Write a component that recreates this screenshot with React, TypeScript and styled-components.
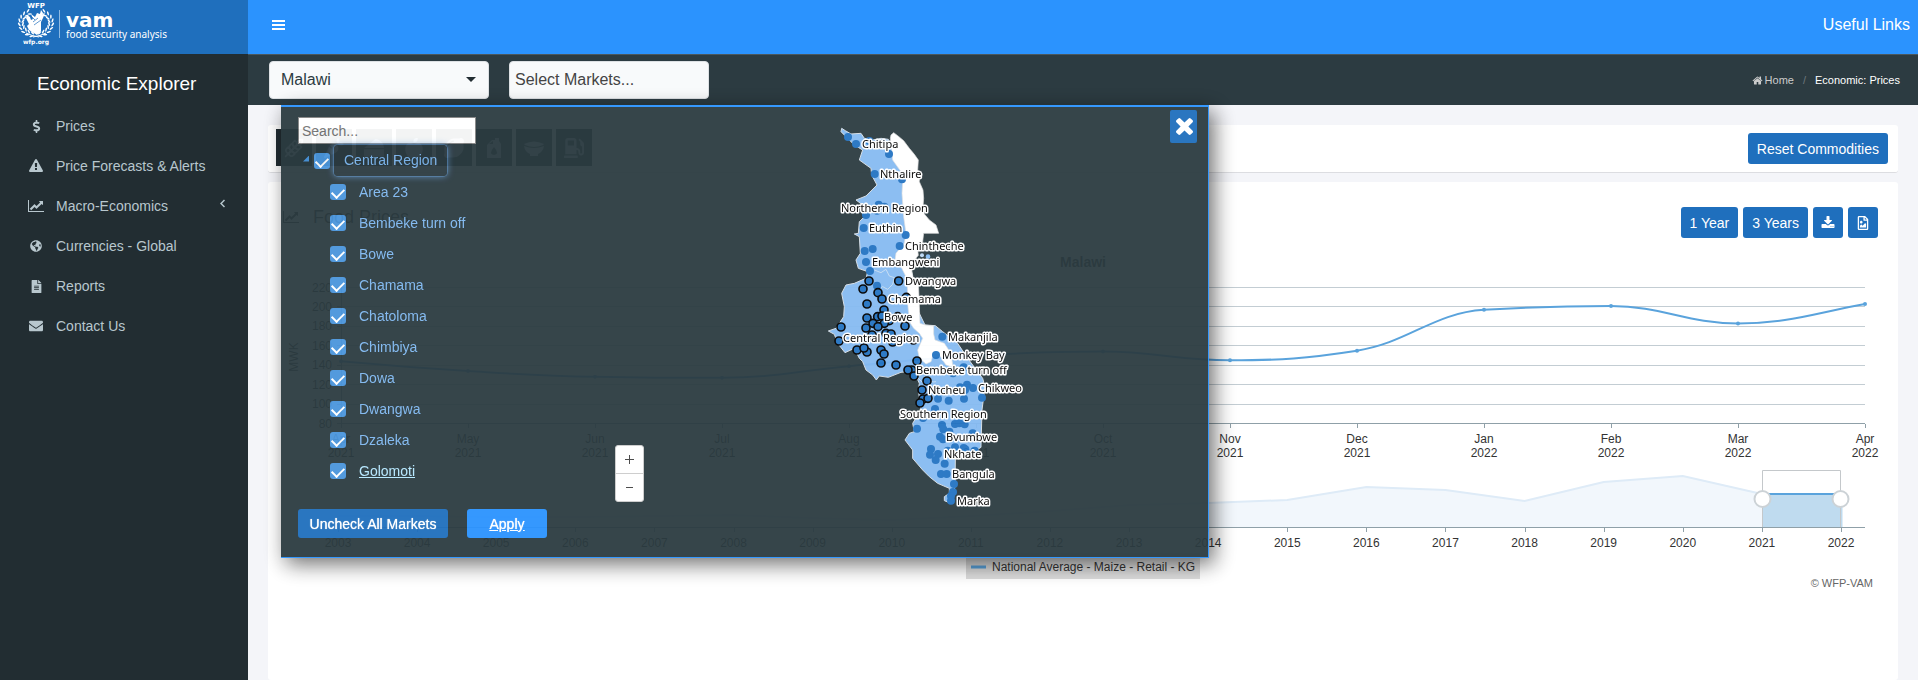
import React, { useEffect, useRef, useState } from "react";
import styled, { createGlobalStyle } from "styled-components";
import { FaDollarSign, FaGlobeAmericas, FaFileAlt, FaEnvelope, FaRegFileImage, FaCheese, FaCarrot, FaGasPump, FaAppleAlt, FaLemon } from "react-icons/fa";
import { LuWheat } from "react-icons/lu";

const GlobalStyle = createGlobalStyle`
  * { box-sizing: border-box; }
  body {
    margin: 0;
    background: #f4f5f9;
    color: #333;
    font: 14px/20px "Liberation Sans", Arial, sans-serif;
  }
  button, input, select { font: inherit; }
`;

const Shell = styled.div`
  display: flex;
  flex-direction: column;
  min-height: 100vh;
`;
const TopBar = styled.header`
  display: flex;
  height: 54px;
  background: #2b93fe;
`;
const Brand = styled.a`
  display: block;
  width: 248px;
  flex: none;
  background: #1f6fbd;
`;
const TopNav = styled.nav`
  flex: 1;
  display: flex;
  justify-content: space-between;
  align-items: center;
  padding: 0 8px 4px 24px;
`;
const MenuButton = styled.button`
  display: grid;
  gap: 2px;
  width: 13px;
  padding: 0;
  border: 0;
  background: none;
  span { height: 2px; background: #fff; }
`;
const TopLink = styled.a`
  color: #fff;
  font-size: 16px;
  text-decoration: none;
`;
const Body = styled.div`
  flex: 1;
  display: flex;
`;
const Sidebar = styled.aside`
  width: 248px;
  flex: none;
  background: #222d32;
`;
const SideTitle = styled.h1`
  margin: 18px 0 10px 37px;
  color: #fff;
  font-size: 19px;
  font-weight: 400;
  line-height: 24px;
`;
const SideList = styled.ul`
  margin: 0;
  padding: 0;
  list-style: none;
`;
const SideItem = styled.a`
  display: flex;
  align-items: center;
  height: 40px;
  padding: 0 23px 0 28px;
  color: #b8c7ce;
  text-decoration: none;
  span { flex: 1; }
`;
const SideIcon = styled.i`
  display: flex;
  justify-content: center;
  width: 16px;
  margin-right: 12px;
`;
const Main = styled.main`
  position: relative;
  flex: 1;
  min-width: 0;
  display: flex;
  flex-direction: column;
`;
const FilterBar = styled.div`
  display: flex;
  align-items: center;
  height: 51px;
  padding: 0 18px 0 21px;
  border-top: 1px solid #4a575d;
  background: #2c3b41;
`;
const SelectWrap = styled.label`
  position: relative;
  width: 220px;
  margin-right: 20px;
  svg { position: absolute; right: 13px; top: 16px; pointer-events: none; }
`;
const CountrySelect = styled.select`
  display: block;
  width: 100%;
  height: 38px;
  padding: 0 11px;
  border: 1px solid #dde1e4;
  border-radius: 4px;
  background: #f8fafb;
  color: #2c3b41;
  font-size: 16px;
  appearance: none;
`;
const MarketInput = styled.input`
  width: 200px;
  height: 38px;
  padding: 0 5px;
  border: 1px solid #dde1e4;
  border-radius: 4px;
  background: #f8fafb;
  font-size: 16px;
  &::placeholder { color: #444; opacity: 1; }
`;
const Crumbs = styled.nav`
  display: flex;
  align-items: center;
  gap: 9px;
  margin-left: auto;
  color: #6c777c;
  font-size: 11px;
  a { display: flex; align-items: center; gap: 2px; color: #ccc; text-decoration: none; }
  strong { color: #fff; font-weight: 400; }
`;
const Card = styled.section<{ $grow?: boolean }>`
  margin: 0 20px;
  border-radius: 3px;
  background: #fff;
  flex: ${(p) => (p.$grow ? 1 : "none")};
`;
const CommodityCard = styled(Card)`
  display: flex;
  align-items: center;
  gap: 4px;
  height: 48px;
  margin: 20px 20px 9px;
  padding: 0 10px 0 8px;
  border-bottom: 1px solid #dcdde1;
`;
const CommodityTile = styled.button`
  display: grid;
  place-items: center;
  width: 36px;
  height: 37px;
  margin-bottom: 2px;
  padding: 0;
  border: 0;
  background: #222d32;
  color: #b8c7ce;
  font-size: 20px;
`;
const Spacer = styled.span`flex: 1;`;
const BlueButton = styled.button`
  display: inline-flex;
  align-items: center;
  justify-content: center;
  height: 31px;
  padding: 0 9px;
  border: 0;
  border-radius: 3px;
  background: #1f6fbd;
  color: #fff;
  white-space: nowrap;
`;
const IconButton = styled(BlueButton)`padding: 0 8px;`;
const CardHead = styled.div`
  display: flex;
  align-items: flex-start;
  justify-content: space-between;
  padding: 25px 20px 0 15px;
`;
const CardTitle = styled.h2`
  display: flex;
  align-items: center;
  gap: 14px;
  margin: 0;
  font-size: 18px;
  font-weight: 400;
  line-height: 20px;
`;
const ButtonRow = styled.div`
  display: flex;
  gap: 5px;
`;
const ChartBox = styled.div`
  height: 360px;
  svg { display: block; }
  text { font: 12px "Liberation Sans", Arial, sans-serif; fill: #333; }
  text.title { font-size: 14px; font-weight: 700; }
  text.credit { font-size: 11px; fill: #666; }
`;
const Popup = styled.section`
  position: absolute;
  left: 33px;
  top: 51px;
  display: grid;
  grid-template-columns: 324px 1fr;
  width: min(928px, calc(100% - 66px));
  border: solid #2b93fe;
  border-width: 2px 1px 1px 0;
  background: #2c3b41;
  opacity: 0.95;
  box-shadow: 5px 6px 20px rgba(0, 0, 0, 0.6);
`;
const TreePane = styled.div`
  padding: 10px 0 19px 17px;
`;
const SearchInput = styled.input`
  display: block;
  width: 178px;
  height: 27px;
  padding: 0 3px;
  border: 1px solid #858585;
  background: #fff;
  &::placeholder { color: #757575; opacity: 1; }
`;
const Tree = styled.ul`
  height: 341px;
  margin: 1px 0 23px;
  padding: 0;
  list-style: none;
  ul { margin: 0; padding: 0 0 0 17px; list-style: none; }
`;
const TreeRow = styled.div`
  display: flex;
  align-items: center;
  height: 31px;
  padding-left: 15px;
`;
const Check = styled.input`
  appearance: none;
  display: grid;
  place-items: start center;
  width: 16px;
  height: 16px;
  margin: 0;
  border-radius: 3px;
  background: #4a95dc;
  &:checked::after {
    content: "";
    width: 6px;
    height: 10px;
    margin-top: 2px;
    border: solid #fff;
    border-width: 0 2px 2px 0;
    transform: rotate(45deg);
  }
`;
const MarketLabel = styled.label<{ $hover?: boolean }>`
  padding: 0 13px;
  color: ${(p) => (p.$hover ? "#b5e8ff" : "#7fb8f0")};
  text-decoration: ${(p) => (p.$hover ? "underline" : "none")};
`;
const RegionLabel = styled.label`
  height: 31px;
  margin-left: 4px;
  padding: 5px 10px;
  border-radius: 4px;
  background: rgba(44, 59, 65, 0.9);
  color: #7fb8f0;
  box-shadow: 0 0 0 1px rgba(90, 140, 190, 0.5), 0 0 7px rgba(110, 170, 230, 0.8);
`;
const Toggle = styled.button`
  width: 6px;
  height: 6px;
  margin: 0 5px 4px -11px;
  padding: 0;
  border: 0;
  background: #4a95dc;
  clip-path: polygon(100% 0, 100% 100%, 0 100%);
`;
const RootRow = styled(TreeRow)`
  padding-left: 16px;
`;
const PopupButton = styled(BlueButton)<{ $bright?: boolean }>`
  height: 29px;
  min-width: ${(p) => (p.$bright ? 80 : 150)}px;
  background: ${(p) => (p.$bright ? "#2b93fe" : "#1f6fbd")};
  text-decoration: ${(p) => (p.$bright ? "underline" : "none")};
  text-shadow: 0 0 1px #fff;
`;
const PopupActions = styled.div`
  display: flex;
  gap: 19px;
`;
const MapPane = styled.div`
  position: relative;
  display: flex;
  justify-content: center;
  align-items: flex-start;
  text {
    font: 11px "Noto Sans", sans-serif;
    fill: #000;
    stroke: #fff;
    stroke-width: 3px;
    stroke-linejoin: round;
    paint-order: stroke;
  }
`;
const ZoomBar = styled.div`
  position: absolute;
  left: 10px;
  bottom: 55px;
  width: 29px;
  border: 1px solid #ccc;
  border-radius: 3px;
  background: #fff;
`;
const ZoomButton = styled.button`
  display: grid;
  place-items: center;
  width: 27px;
  height: 27px;
  padding: 0;
  border: 0;
  background: none;
  color: #333;
  & + & { height: 28px; border-top: 1px solid #ccc; }
`;
const CloseButton = styled.button`
  position: absolute;
  top: 3px;
  right: 11px;
  display: grid;
  place-items: center;
  width: 27px;
  height: 33px;
  padding: 0 0 0 1px;
  border: 0;
  border-radius: 2px;
  background: #1f6fbd;
`;

const GLYPHS = {
  lineChart: "M2048 1536v128h-2048v-1536h128v1408h1920zM1920 288v435q0 21-19.5 29.5t-35.5-7.5l-121-121-633 633q-10 10-23 10t-23-10l-233-233-416 416-192-192 585-585q10-10 23-10t23 10l233 233 464-464-121-121q-16-16-7.5-35.5t29.5-19.5h435q14 0 23 9t9 23z",
  warning: "M1024 1375v-190q0-14-9.5-23.5t-22.5-9.5h-192q-13 0-22.5 9.5t-9.5 23.5v190q0 14 9.5 23.5t22.5 9.5h192q13 0 22.5-9.5t9.5-23.5zm-2-374l18-459q0-12-10-19-13-11-24-11h-220q-11 0-24 11-10 7-10 21l17 457q0 10 10 16.5t24 6.5h185q14 0 23.5-6.5t10.5-16.5zm-14-934l768 1408q35 63-2 126-17 29-46.5 46t-63.5 17h-1536q-34 0-63.5-17t-46.5-46q-37-63-2-126l768-1408q17-31 47-49t65-18 65 18 47 49z",
  home: "M1472 992v480q0 26-19 45t-45 19h-384v-384h-256v384h-384q-26 0-45-19t-19-45v-480q0-1 .5-3t.5-3l575-474 575 474q1 2 1 6zm223-69l-62 74q-8 9-21 11h-3q-13 0-21-7l-692-577-692 577q-12 8-24 7-13-2-21-11l-62-74q-8-10-7-23.5t11-21.5l719-599q32-26 76-26t76 26l244 204v-195q0-14 9-23t23-9h192q14 0 23 9t9 23v408l219 182q10 8 11 21.5t-7 23.5z",
  download: "M1344 1344q0-26-19-45t-45-19-45 19-19 45 19 45 45 19 45-19 19-45zm256 0q0-26-19-45t-45-19-45 19-19 45 19 45 45 19 45-19 19-45zm128-224v320q0 40-28 68t-68 28h-1472q-40 0-68-28t-28-68v-320q0-40 28-68t68-28h465l135 136q58 56 136 56t136-56l136-136h464q40 0 68 28t28 68zm-325-569q17 41-14 70l-448 448q-18 19-45 19t-45-19l-448-448q-31-29-14-70 17-39 59-39h256v-448q0-26 19-45t45-19h256q26 0 45 19t19 45v448h256q42 0 59 39z",
  times: "M1490 1322q0 40-28 68l-136 136q-28 28-68 28t-68-28l-294-294-294 294q-28 28-68 28t-68-28l-136-136q-28-28-28-68t28-68l294-294-294-294q-28-28-28-68t28-68l136-136q28-28 68-28t68 28l294 294 294-294q28-28 68-28t68 28l136 136q28 28 28 68t-28 68l-294 294 294 294q28 28 28 68z",
};
function Glyph({ name, size, wide }: { name: keyof typeof GLYPHS; size: number; wide?: boolean }) {
  return (
    <svg width={wide ? Math.round((size * 8) / 7) : size} height={size} viewBox={`0 0 ${wide ? 2048 : 1792} 1792`} fill="currentColor" aria-hidden="true">
      <path d={GLYPHS[name]} />
    </svg>
  );
}
function OilJug() {
  return (
    <svg width="16" height="20" viewBox="0 0 16 20" fill="currentColor" fillRule="evenodd" aria-hidden="true">
      <path d="M2 6l4-4h3V0h4v3l2 3v14H1V7zM3 6h4V3zM8 9q-6 7 0 8 6-1 0-8z" />
    </svg>
  );
}
function Bowl() {
  return (
    <svg width="22" height="16" viewBox="0 0 22 16" fill="currentColor" aria-hidden="true">
      <path d="M1 4q10-5 20 0l-1 1q-9 4-18 0zM1 6q10 4 20 0-1 6-6 8v2H7v-2Q2 12 1 6z" />
    </svg>
  );
}

function Logo() {
  const leaves = Array.from({ length: 9 }, (_, i) => 105 + i * 17);
  return (
    <svg width="200" height="54" viewBox="0 0 200 54" fill="#fff" role="img" aria-label="WFP vam food security analysis">
      <text x="36" y="8" textAnchor="middle" fontFamily="DejaVu Sans" fontWeight="700" fontSize="7">WFP</text>
      <text x="36" y="44" textAnchor="middle" fontFamily="DejaVu Sans" fontWeight="700" fontSize="6">wfp.org</text>
      {[1, -1].map((side) => (
        <g key={side} transform={`translate(36 23) scale(${side} 1)`}>
          {leaves.map((a) => {
            const r = (a * Math.PI) / 180;
            const x = Math.cos(r) * 15;
            const y = Math.sin(r) * 12;
            return (
              <g key={a} transform={`translate(${x} ${y}) rotate(${a + 90})`}>
                <ellipse cx="1" cy="-1.5" rx="2.2" ry="0.8" transform="rotate(-28)" />
                <ellipse cx="1" cy="1.5" rx="2.2" ry="0.8" transform="rotate(28)" />
              </g>
            );
          })}
          <path d="M-10 10Q-4 13 3 14" fill="none" stroke="#fff" />
        </g>
      ))}
      <path d="M27 15l3 2 1 3 2-1-2-5 4 3 2-4 3 1 1-4 2 3-1 2 3-2-2 5-2 4v9l-4 4-8-5-2-4 2-2-3-6z" />
      <path d="M33 22l5-4M34 25l7-5M31 16l4 4" stroke="#1f6fbd" strokeWidth="0.7" />
      <path d="M59.500 10v28" stroke="#8db9e2" />
      <text x="66" y="27" fontFamily="DejaVu Sans" fontWeight="700" fontSize="20">vam</text>
      <text x="66" y="38" fontFamily="Noto Sans" fontSize="10">food security analysis</text>
    </svg>
  );
}

const PRICES: [string, string, number][] = [
  ["Apr", "2021", 144], ["May", "2021", 134], ["Jun", "2021", 128], ["Jul", "2021", 127], ["Aug", "2021", 139],
  ["Sep", "2021", 150], ["Oct", "2021", 154], ["Nov", "2021", 145], ["Dec", "2021", 155], ["Jan", "2022", 197],
  ["Feb", "2022", 201], ["Mar", "2022", 183], ["Apr", "2022", 203],
];
/* Heights of the overview area above its axis, 2003 to 2022. */
const OVERVIEW = [12, 12, 11, 11, 12, 13, 10, 8, 12, 17, 23, 25, 28, 41, 38, 27, 46, 52, 34, 34];

function smooth(pts: number[][]) {
  const slope = pts.map((p, i) => {
    const a = pts[i - 1];
    const b = pts[i + 1];
    if (!a || !b || (p[1] - a[1]) * (b[1] - p[1]) <= 0) return 0;
    const mean = (b[1] - a[1]) / (b[0] - a[0]);
    const limit = 2 * Math.min(Math.abs((p[1] - a[1]) / (p[0] - a[0])), Math.abs((b[1] - p[1]) / (b[0] - p[0])));
    return Math.sign(mean) * Math.min(Math.abs(mean), limit);
  });
  slope[0] = ((pts[1][1] - pts[0][1]) / (pts[1][0] - pts[0][0])) * 1.2;
  const last = pts.length - 1;
  slope[last] = ((pts[last][1] - pts[last - 1][1]) / (pts[last][0] - pts[last - 1][0])) * 1.2;
  return pts.reduce((d, p, i) => {
    if (!i) return `M${p[0]} ${p[1]}`;
    const q = pts[i - 1];
    const h = (p[0] - q[0]) * 0.4;
    return `${d}C${q[0] + h} ${q[1] + slope[i - 1] * h} ${p[0] - h} ${p[1] - slope[i] * h} ${p[0]} ${p[1]}`;
  }, "");
}

function PriceChart() {
  const box = useRef<HTMLDivElement>(null);
  const [w, setW] = useState(1630);
  useEffect(() => {
    const watcher = new ResizeObserver(([e]) => setW(Math.round(e.contentRect.width)));
    if (box.current) watcher.observe(box.current);
    return () => watcher.disconnect();
  }, []);
  const left = 73;
  const right = w - 33;
  const x = (i: number) => left + ((right - left) * i) / 12;
  const y = (v: number) => 185.5 - ((v - 80) * 136) / 140;
  const tick = (n: number) => Math.round(n) + 0.5;
  const yearX = (i: number) => 70 + ((w - 57 - 70) * i) / 19;
  const points = PRICES.map((p, i) => [x(i), y(p[2])]);
  const overview = OVERVIEW.map((h, i) => `${yearX(i)} ${290 - h}`);
  const from = tick(yearX(18));
  const to = tick(yearX(19)) - 1;
  return (
    <ChartBox ref={box}>
      <svg width={w} height="360" role="img" aria-label="Malawi food prices in MWK">
        <text className="title" x={w / 2} y="29" textAnchor="middle">Malawi</text>
        {[220, 200, 180, 160, 140, 120, 100, 80].map((v) => (
          <g key={v}>
            <path d={`M${left} ${tick(y(v) - 0.5)}H${right}`} stroke={v === 80 ? "#8fa0a8" : "#c3cdd3"} />
            <path d={`M${left - 4} ${tick(y(v) - 0.5)}h4`} stroke="#8fa0a8" />
            <text x={left - 9} y={y(v) + 4} textAnchor="end">{v}</text>
          </g>
        ))}
        <path d={`M${left + 0.5} 49v137`} stroke="#8fa0a8" />
        <text transform="translate(30 119) rotate(-90)" textAnchor="middle">MWK</text>
        <path d={smooth(points)} fill="none" stroke="#5aa3dc" strokeWidth="2" />
        {PRICES.map((p, i) => (
          <g key={i}>
            <circle cx={x(i)} cy={y(p[2])} r="2" fill="#5aa3dc" />
            <path d={`M${tick(x(i))} 186v4`} stroke="#8fa0a8" />
            <text x={x(i)} y="205" textAnchor="middle">{p[0]}</text>
            <text x={x(i)} y="219" textAnchor="middle">{p[1]}</text>
          </g>
        ))}
        <path d={`M${overview[0]}L${overview.slice(0, 19).join("L")}V290H${yearX(0)}z`} fill="#f2f7fc" />
        <path d={`M${overview.slice(0, 19).join("L")}`} fill="none" stroke="#deebf7" strokeWidth="2" />
        <path d={`M${from} 256H${to + 2}V290H${from}z`} fill="#bfdbef" />
        <path d={`M${from} 256H${to}`} stroke="#5aa3dc" strokeWidth="2" />
        <path d={`M${from} 290V232.500H${to}V290`} fill="none" stroke="#c4c8cb" />
        <path d={`M${left} 289.500H${right}`} stroke="#8fa0a8" />
        {OVERVIEW.map((_, i) => (
          <g key={i}>
            <path d={`M${tick(yearX(i))} 290v4`} stroke="#8fa0a8" />
            <text x={yearX(i)} y="309" textAnchor="middle">{2003 + i}</text>
          </g>
        ))}
        {[from, to].map((c) => (
          <circle key={c} cx={c} cy="261" r="8" fill="#fff" stroke="#ccd2d6" strokeWidth="2" />
        ))}
        <rect x={w / 2 - 117} y="315" width="234" height="26" fill="#dcdcdc" />
        <path d={`M${w / 2 - 112} 329h15`} stroke="#5aa3dc" strokeWidth="3" />
        <text x={w / 2 - 91} y="333">National Average - Maize - Retail - KG</text>
        <text className="credit" x={w - 25} y="349" textAnchor="end">© WFP-VAM</text>
      </svg>
    </ChartBox>
  );
}

const LAND = "122,55 133,62 150,72 180,70 190,85 215,90 240,85 262,88 300,180 330,300 330,470 350,600 372,645 403,647 425,665 470,700 500,745 545,805 552,830 543,900 540,1012 520,1025 470,1030 463,1050 462,1130 450,1180 430,1172 430,1160 445,1150 445,1135 410,1120 385,1100 365,1080 335,1045 335,1020 312,990 325,970 340,965 335,940 360,900 352,840 355,820 345,798 320,785 300,787 262,802 235,798 226,810 215,795 195,780 185,755 175,745 160,715 132,728 110,700 100,673 82,663 105,655 115,640 128,620 130,590 122,550 135,525 160,520 195,505 200,485 172,475 165,450 178,430 175,380 160,372 172,370 175,335 190,320 178,300 185,285 165,270 195,258 228,225 212,195 210,175 175,150 185,120 160,105 135,80 120,65";
const LAKE = "268,85 270,75 278,68 290,77 308,92 325,115 340,133 352,150 350,180 356,190 355,215 366,240 368,265 366,290 370,312 385,330 405,345 413,370 368,370 365,395 350,420 352,436 332,460 330,475 336,500 352,520 354,560 357,640 372,645 398,648 398,672 402,690 430,700 450,730 456,772 435,765 415,735 398,730 390,755 375,762 355,745 350,720 365,685 355,670 338,655 328,640 322,600 318,560 320,540 315,500 300,470 282,450 285,430 310,400 315,370 308,320 303,250 305,215 300,185 275,150 272,120";
const MARKETS = "141,81 165,102 264,132 205,93 221,192 303,208 233,284 228,302 250,290 195,315 188,354 314,375 296,408 215,417 191,423 195,456 207,483 228,527 424,680 405,735 488,772 456,790 498,824 477,832 516,834 492,840 489,866 543,863 411,866 443,872 402,897 366,924 348,956 423,945 427,958 462,942 475,940 491,943 515,970 445,965 417,980 426,988 390,1017 387,1034 411,1032 404,1050 462,1012 488,1014 493,1018 440,1022 521,1022 431,1061 420,1092 437,1092 459,1122 456,1146 450,1158 450,1172";
const SELECTED = "204,513 293,513 186,537 231,548 243,567 198,582 316,562 249,600 198,624 230,620 243,618 216,640 265,632 250,640 290,620 195,654 231,650 312,648 120,651 213,675 255,670 270,672 275,696 337,690 114,693 168,720 198,726 189,714 240,720 249,732 240,759 285,765 348,753 332,780 321,780 339,798 378,813 363,840 366,867 381,865 357,879";
const PLACES: [string, number, number][] = [
  ["Chitipa", 61, 38], ["Nthalire", 79, 68], ["Northern Region", 40, 102], ["Euthin", 68, 122],
  ["Chintheche", 104, 140], ["Embangweni", 71, 156], ["Dwangwa", 104, 175], ["Chamama", 87, 193],
  ["Bowe", 83, 211], ["Central Region", 42, 232], ["Makanjila", 147, 231], ["Monkey Bay", 141, 249],
  ["Bembeke turn off", 115, 264], ["Ntcheu", 127, 284], ["Chikweo", 177, 282], ["Southern Region", 99, 308],
  ["Bvumbwe", 145, 331], ["Nkhate", 143, 348], ["Bangula", 151, 368], ["Marka", 156, 395],
];
const pairs = (s: string) => s.split(" ").map((p) => p.split(",").map(Number));

function MalawiMap() {
  return (
    <svg width="240" height="404" viewBox="-14 -3 240 404" role="img" aria-label="Map of markets in Malawi">
      <g transform="scale(0.33333)">
        <polygon points={LAND} fill="#86bbf2" stroke="#d5dde4" strokeWidth="3" />
        <polygon points={LAKE} fill="#fff" stroke="#e0e0e0" strokeWidth="2" />
        <path d="M200 488l20-8 20 8 15-10 10 20 15 5-5 20-15 15-15-8-10 8M370 800q20 20 35 15M345 798l30 30" fill="none" stroke="#c5dcf2" strokeWidth="3" />
        <circle cx="363" cy="436" r="6" fill="#bcd8f5" />
        <circle cx="381" cy="440" r="7" fill="#86bbf2" />
        {pairs(MARKETS).map(([x, y]) => <circle key={`${x}-${y}`} cx={x} cy={y} r="12" fill="#2373c2" />)}
        {pairs(SELECTED).map(([x, y]) => <circle key={`${x}-${y}`} cx={x} cy={y} r="12" fill="#2373c2" stroke="#000" strokeWidth="5" />)}
      </g>
      {PLACES.map(([name, x, y]) => <text key={name} x={x} y={y}>{name}</text>)}
    </svg>
  );
}

const MARKET_NAMES = ["Area 23", "Bembeke turn off", "Bowe", "Chamama", "Chatoloma", "Chimbiya", "Dowa", "Dwangwa", "Dzaleka", "Golomoti"];

function MarketPopup() {
  return (
    <Popup aria-label="Select markets">
      <TreePane>
        <SearchInput placeholder="Search..." aria-label="Search markets" />
        <Tree>
          <li>
            <RootRow>
              <Toggle aria-label="Collapse Central Region" />
              <Check type="checkbox" id="region" defaultChecked />
              <RegionLabel htmlFor="region">Central Region</RegionLabel>
            </RootRow>
            <ul>
              {MARKET_NAMES.map((name, i) => (
                <li key={name}>
                  <TreeRow>
                    <Check type="checkbox" id={`market-${i}`} defaultChecked />
                    <MarketLabel htmlFor={`market-${i}`} $hover={name === "Golomoti"}>{name}</MarketLabel>
                  </TreeRow>
                </li>
              ))}
            </ul>
          </li>
        </Tree>
        <PopupActions>
          <PopupButton>Uncheck All Markets</PopupButton>
          <PopupButton $bright>Apply</PopupButton>
        </PopupActions>
      </TreePane>
      <MapPane>
        <MalawiMap />
        <ZoomBar>
          <ZoomButton aria-label="Zoom in">
            <svg width="9" height="9" stroke="#444"><path d="M0 4.500h9M4.500 0v9" /></svg>
          </ZoomButton>
          <ZoomButton aria-label="Zoom out">
            <svg width="7" height="9" stroke="#444"><path d="M0 4.500h7" /></svg>
          </ZoomButton>
        </ZoomBar>
        <CloseButton aria-label="Close">
          <svg width="17" height="17" viewBox="302 366 1188 1188" fill="#fff"><path d={GLYPHS.times} /></svg>
        </CloseButton>
      </MapPane>
    </Popup>
  );
}

const NAV = [
  { label: "Prices", icon: <FaDollarSign size={13} /> },
  { label: "Price Forecasts & Alerts", icon: <Glyph name="warning" size={14} /> },
  { label: "Macro-Economics", icon: <Glyph name="lineChart" size={14} wide />, more: true },
  { label: "Currencies - Global", icon: <FaGlobeAmericas size={12} /> },
  { label: "Reports", icon: <FaFileAlt size={13} /> },
  { label: "Contact Us", icon: <FaEnvelope size={14} /> },
];
const COMMODITIES = [
  { label: "Cereals", icon: <LuWheat /> },
  { label: "Vegetables", icon: <FaCarrot /> },
  { label: "Dairy and meat", icon: <FaCheese /> },
  { label: "Fruit", icon: <FaAppleAlt /> },
  { label: "Pulses", icon: <FaLemon /> },
  { label: "Oil", icon: <OilJug /> },
  { label: "Prepared food", icon: <Bowl /> },
  { label: "Fuel", icon: <FaGasPump /> },
];

export default function App() {
  return (
    <>
      <GlobalStyle />
      <Shell>
        <TopBar>
          <Brand href="#"><Logo /></Brand>
          <TopNav>
            <MenuButton aria-label="Toggle navigation"><span /><span /><span /></MenuButton>
            <TopLink href="#">Useful Links</TopLink>
          </TopNav>
        </TopBar>
        <Body>
          <Sidebar>
            <SideTitle>Economic Explorer</SideTitle>
            <SideList>
              {NAV.map((n) => (
                <li key={n.label}>
                  <SideItem href="#">
                    <SideIcon>{n.icon}</SideIcon>
                    <span>{n.label}</span>
                    {n.more && (
                      <svg width="5" height="14" viewBox="0 0 5 14" fill="none" stroke="currentColor" strokeWidth="1.500" aria-hidden="true">
                        <path d="M4.500 1L1 4.500 4.500 8" />
                      </svg>
                    )}
                  </SideItem>
                </li>
              ))}
            </SideList>
          </Sidebar>
          <Main>
            <FilterBar>
              <SelectWrap>
                <CountrySelect aria-label="Country"><option>Malawi</option></CountrySelect>
                <svg width="10" height="5" viewBox="0 0 10 5" fill="#222d32"><path d="M0 0h10L5 5z" /></svg>
              </SelectWrap>
              <MarketInput placeholder="Select Markets..." aria-label="Markets" />
              <Crumbs>
                <a href="#"><Glyph name="home" size={11} />Home</a>
                <span>/</span>
                <strong>Economic: Prices</strong>
              </Crumbs>
            </FilterBar>
            <CommodityCard>
              {COMMODITIES.map((c) => (
                <CommodityTile key={c.label} aria-label={c.label}>{c.icon}</CommodityTile>
              ))}
              <Spacer />
              <BlueButton>Reset Commodities</BlueButton>
            </CommodityCard>
            <Card $grow>
              <CardHead>
                <CardTitle><Glyph name="lineChart" size={14} wide />Food Prices</CardTitle>
                <ButtonRow>
                  <BlueButton>1 Year</BlueButton>
                  <BlueButton>3 Years</BlueButton>
                  <IconButton aria-label="Download data"><Glyph name="download" size={14} /></IconButton>
                  <IconButton aria-label="Save as image"><FaRegFileImage size={14} /></IconButton>
                </ButtonRow>
              </CardHead>
              <PriceChart />
            </Card>
            <MarketPopup />
          </Main>
        </Body>
      </Shell>
    </>
  );
}
